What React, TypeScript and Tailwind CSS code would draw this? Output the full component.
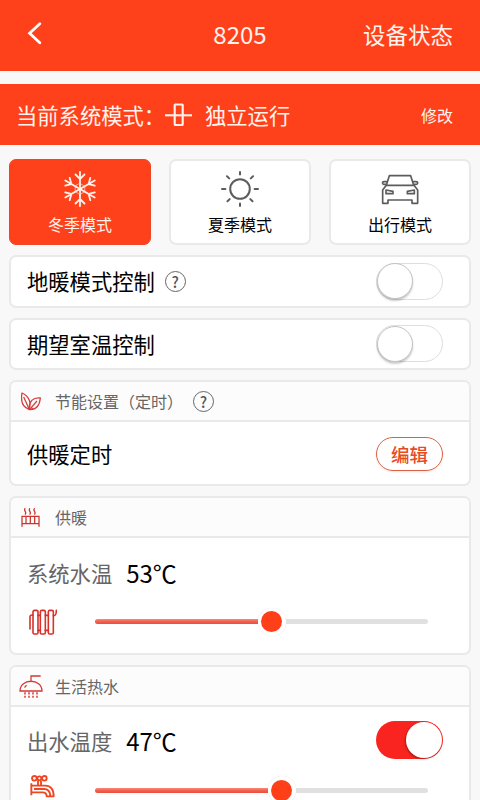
import React, { useState } from 'react';

const SnowIcon = () => (
  <svg width="36" height="36" viewBox="-18 -18 36 36" fill="none" stroke="#fff3ec" strokeWidth="1.8" strokeLinecap="round">
    {[0, 60, 120, 180, 240, 300].map((angle) => (
      <path key={angle} d="M0 0V-17M-4.5 -14.5L0 -10L4.5 -14.5" transform={`rotate(${angle})`} />
    ))}
    <path d="M0 -5.5L4.8 -2.7V2.7L0 5.5L-4.8 2.7V-2.7Z" strokeWidth="0.6" />
  </svg>
);

const SunIcon = () => (
  <svg width="38" height="36" viewBox="-19 -18 38 36" fill="none" stroke="#5c5c5c" strokeWidth="2" strokeLinecap="round">
    <circle r="9.8" />
    <path d="M0 -17V-14.5M0 14.5V17M-18 0H-14.6M14.6 0H18M-13 -12.8L-10.8 -10.6M13 -12.8L10.8 -10.6M-12.5 12.3L-10.3 10.1M12.5 12.3L10.3 10.1" />
  </svg>
);

const CarIcon = () => (
  <svg width="40" height="36" viewBox="0 0 120 108" fill="none" stroke="#5c5c5c" strokeWidth="5" strokeLinejoin="round">
    <path d="M28 14H92L101 43H19Z" />
    <path d="M19 43L8 57V97H24V87H96V97H113V57L102 43" />
    <path d="M20 40H12C6 39 6 32 12 32H22M100 40H108C115 39 115 32 108 32H98" />
    <path d="M18 57L39 61V68H18ZM103 57L82 61V68H103Z" />
  </svg>
);

const LeafIcon = () => (
  <svg width="20" height="19" viewBox="0 0 60 57" fill="none" stroke="#d63c3c" strokeWidth="3.8" strokeLinejoin="round">
    <path d="M3 3C-1 24 3 44 24 52C31 35 27 14 3 3Z" />
    <path d="M58 18C36 16 23 27 25 53C46 54 56 40 58 18Z" />
    <path d="M8 15L24 50M26 52L48 27M36 52L31 46" />
  </svg>
);

const HeatingIcon = () => (
  <svg width="19" height="19" viewBox="0 0 57 57" fill="none" stroke="#cb352e" strokeWidth="3.8">
    <path d="M3 56V25H54V56M3 47H54M15 25V47M28 25V47M41 25V47" />
    <path d="M13 1C5 8 20 12 12 20M27 1C19 8 34 12 26 20M41 1C33 8 48 12 40 20" />
  </svg>
);

const RadiatorIcon = () => (
  <svg width="28" height="26" viewBox="0 0 84 78" fill="none" stroke="#d8302a" strokeWidth="4.8" strokeLinecap="round">
    <rect x="12" y="4" width="15" height="71" rx="4" />
    <rect x="34" y="4" width="15" height="71" rx="4" />
    <rect x="58" y="4" width="15" height="71" rx="4" />
    <path d="M12 18C5 17 3 20 3 25V60M27 19H34M49 19H58M27 64H34M49 64H58M73 20C80 20 82 17 82 4" />
  </svg>
);

const ShowerIcon = () => (
  <svg width="24" height="23" viewBox="0 0 72 69" fill="none" stroke="#d03a35" strokeWidth="3.8">
    <path d="M3 48C3 9 69 9 69 48ZM36 18V3H65M17 38C18 34 20 32 23 31" />
    <path d="M18 52V68M30 52V68M42 52V68M54 52V68" strokeWidth="4.4" strokeDasharray="6.5 3.5" />
  </svg>
);

const FaucetIcon = () => (
  <svg width="26" height="30" viewBox="0 0 78 90" fill="none" stroke="#ee4522" strokeWidth="5.6" strokeLinejoin="round">
    <circle cx="13" cy="10" r="7" />
    <circle cx="28" cy="10" r="6" />
    <circle cx="43" cy="10" r="7" />
    <path d="M24 17V32M33 17V32M4 25V61M4 32H45C63 32 71 42 71 64H50C50 56 47 52 38 52H4M12 42H42C55 42 60 48 61 62" />
    <path d="M60 77C55 83 57 87 61 87C66 87 66 82 60 77Z" />
  </svg>
);

const ModeIcon = () => (
  <svg width="27" height="24" viewBox="0 0 27 24" fill="none" stroke="#fff3ec" strokeWidth="2.1">
    <path d="M0 12.3H27" />
    <rect x="9.7" y="1.5" width="8" height="20.5" rx="0.5" />
  </svg>
);

const Help = () => (
  <span className="flex h-[21px] w-[21px] items-center justify-center rounded-full border-[1.5px] border-[#666] text-[15px] font-medium leading-none text-[#555]">
    ?
  </span>
);

interface ToggleProps {
  on: boolean;
  onChange: () => void;
}

const Toggle = ({ on, onChange }: ToggleProps) => (
  <button
    onClick={onChange}
    className={
      on
        ? 'flex h-[38px] w-[67px] items-center justify-end rounded-full bg-[#f9231f] px-px'
        : 'flex h-[37px] w-[67px] items-center rounded-full border border-[#dedede] bg-white'
    }
  >
    <span
      className={
        on
          ? 'h-9 w-9 rounded-full bg-white shadow-[-1px_1px_2px_rgba(0,0,0,0.3)]'
          : 'h-9 w-9 rounded-full border border-[#c2c2c2] bg-white shadow-[0_2px_2px_rgba(0,0,0,0.2)]'
      }
    />
  </button>
);

const Slider = ({ fill }: { fill: number }) => (
  <div className="flex h-7 w-[333px] items-center">
    <div
      className="h-[5px] rounded-l-full bg-linear-to-b from-[#f58a7b] via-[#f4604d] to-[#ef4d38]"
      style={{ width: fill }}
    />
    <div className="flex h-7 w-7 items-center justify-center rounded-full bg-white shadow-[0_0_1px_rgba(0,0,0,0.15)]">
      <div className="h-[21px] w-[21px] rounded-full bg-[#ff3f18]" />
    </div>
    <div className="h-[5px] flex-1 rounded-r-full bg-[#e0e0e0]" />
  </div>
);

const modes = [
  { id: 'winter', label: '冬季模式', icon: <SnowIcon /> },
  { id: 'summer', label: '夏季模式', icon: <SunIcon /> },
  { id: 'away', label: '出行模式', icon: <CarIcon /> },
];

const card = 'rounded-[7px] border-2 border-[#e9e9e9] bg-white';
const cardHead = 'flex h-10 items-center border-b-2 border-[#e9e9e9] bg-[#fcfcfc] text-[16px] text-[#666]';

export default function App() {
  const [mode, setMode] = useState('winter');
  const [floor, setFloor] = useState(false);
  const [room, setRoom] = useState(false);
  const [water, setWater] = useState(true);

  return (
    <div className="h-[800px] w-[480px] overflow-hidden bg-[#f8f8f8] font-['Noto_Sans_CJK_SC',sans-serif] leading-none text-black">
      <header className="grid h-[70.5px] grid-cols-3 items-center bg-[#ff411b] px-[27px] pb-[2px] text-[#fff3ec]">
        <button className="-mt-[2px] w-4">
          <svg width="16" height="24" viewBox="0 0 16 24" fill="none" stroke="#fff" strokeWidth="2.8" strokeLinecap="round">
            <path d="M12.8 2.8L2.6 12.2L12.8 21.8" />
          </svg>
        </button>
        <h1 className="text-center text-[24px]">8205</h1>
        <span className="text-right text-[22.5px]">设备状态</span>
      </header>

      <section className="mt-[13.5px] flex h-[61px] items-center bg-[#ff411b] pr-[27px] pl-4 text-[21.3px] text-[#fff3ec]">
        <span className="w-[149px] whitespace-nowrap">当前系统模式：</span>
        <ModeIcon />
        <span className="ml-[13px]">独立运行</span>
        <button className="ml-auto text-[16px]">修改</button>
      </section>

      <main className="flex flex-col gap-[10px] px-[9px] pt-[14px]">
        <div className="flex justify-between">
          {modes.map((m) => (
            <button
              key={m.id}
              onClick={() => setMode(m.id)}
              className={
                mode === m.id
                  ? 'flex h-[86px] w-[142px] flex-col items-center gap-[9px] rounded-[7px] border border-[#ee4526] bg-[#ff411b] pt-[11px] text-[16px] text-[#fff3ec]'
                  : 'flex h-[86px] w-[142px] flex-col items-center gap-[9px] rounded-[7px] border-2 border-[#e9e9e9] bg-white pt-[10px] text-[16px]'
              }
            >
              {m.icon}
              <span>{m.label}</span>
            </button>
          ))}
        </div>

        <div className={`${card} flex h-[52.5px] items-center gap-[10px] pr-[26px] pl-4 text-[21.3px]`}>
          <span className="-mt-px">地暖模式控制</span>
          <Help />
          <div className="ml-auto">
            <Toggle on={floor} onChange={() => setFloor(!floor)} />
          </div>
        </div>

        <div className={`${card} flex h-[52.5px] items-center justify-between pr-[26px] pl-4 text-[21.3px]`}>
          <span>期望室温控制</span>
          <Toggle on={room} onChange={() => setRoom(!room)} />
        </div>

        <div className={`${card} h-[106px] overflow-hidden`}>
          <div className={cardHead}>
            <div className="flex w-[44px] pl-[10px]">
              <LeafIcon />
            </div>
            <span className="w-[138px] whitespace-nowrap">节能设置（定时）</span>
            <Help />
          </div>
          <div className="flex h-[64px] items-center justify-between pr-[26px] pl-4 text-[21.3px]">
            <span>供暖定时</span>
            <button className="h-[34px] w-[67px] rounded-full border-[1.5px] border-[#dc6045] text-[18.5px] font-medium text-[#e84a25] shadow-[0_1px_2px_rgba(220,80,50,0.15)]">
              编辑
            </button>
          </div>
        </div>

        <div className={`${card} h-[159px] overflow-hidden`}>
          <div className={cardHead}>
            <div className="flex w-[44px] pl-[10px]">
              <HeatingIcon />
            </div>
            <span>供暖</span>
          </div>
          <div className="flex h-[70px] items-center gap-[14px] pl-4">
            <span className="text-[21.3px] text-[#666]">系统水温</span>
            <span className="text-[24px]">53℃</span>
          </div>
          <div className="flex h-[27px] items-center pl-[18px]">
            <div className="w-[66px]">
              <RadiatorIcon />
            </div>
            <Slider fill={162.5} />
          </div>
        </div>

        <div className={`${card} h-[159px] overflow-hidden`}>
          <div className={cardHead}>
            <div className="flex w-[44px] pl-2">
              <ShowerIcon />
            </div>
            <span>生活热水</span>
          </div>
          <div className="flex h-[68px] items-center pr-[26px] pl-4">
            <span className="text-[21.3px] text-[#666]">出水温度</span>
            <span className="ml-[14px] text-[24px]">47℃</span>
            <div className="mb-[2px] ml-auto">
              <Toggle on={water} onChange={() => setWater(!water)} />
            </div>
          </div>
          <div className="flex h-[30px] items-center pl-[19px]">
            <div className="-mt-px w-[65px]">
              <FaucetIcon />
            </div>
            <Slider fill={172.5} />
          </div>
        </div>
      </main>
    </div>
  );
}
